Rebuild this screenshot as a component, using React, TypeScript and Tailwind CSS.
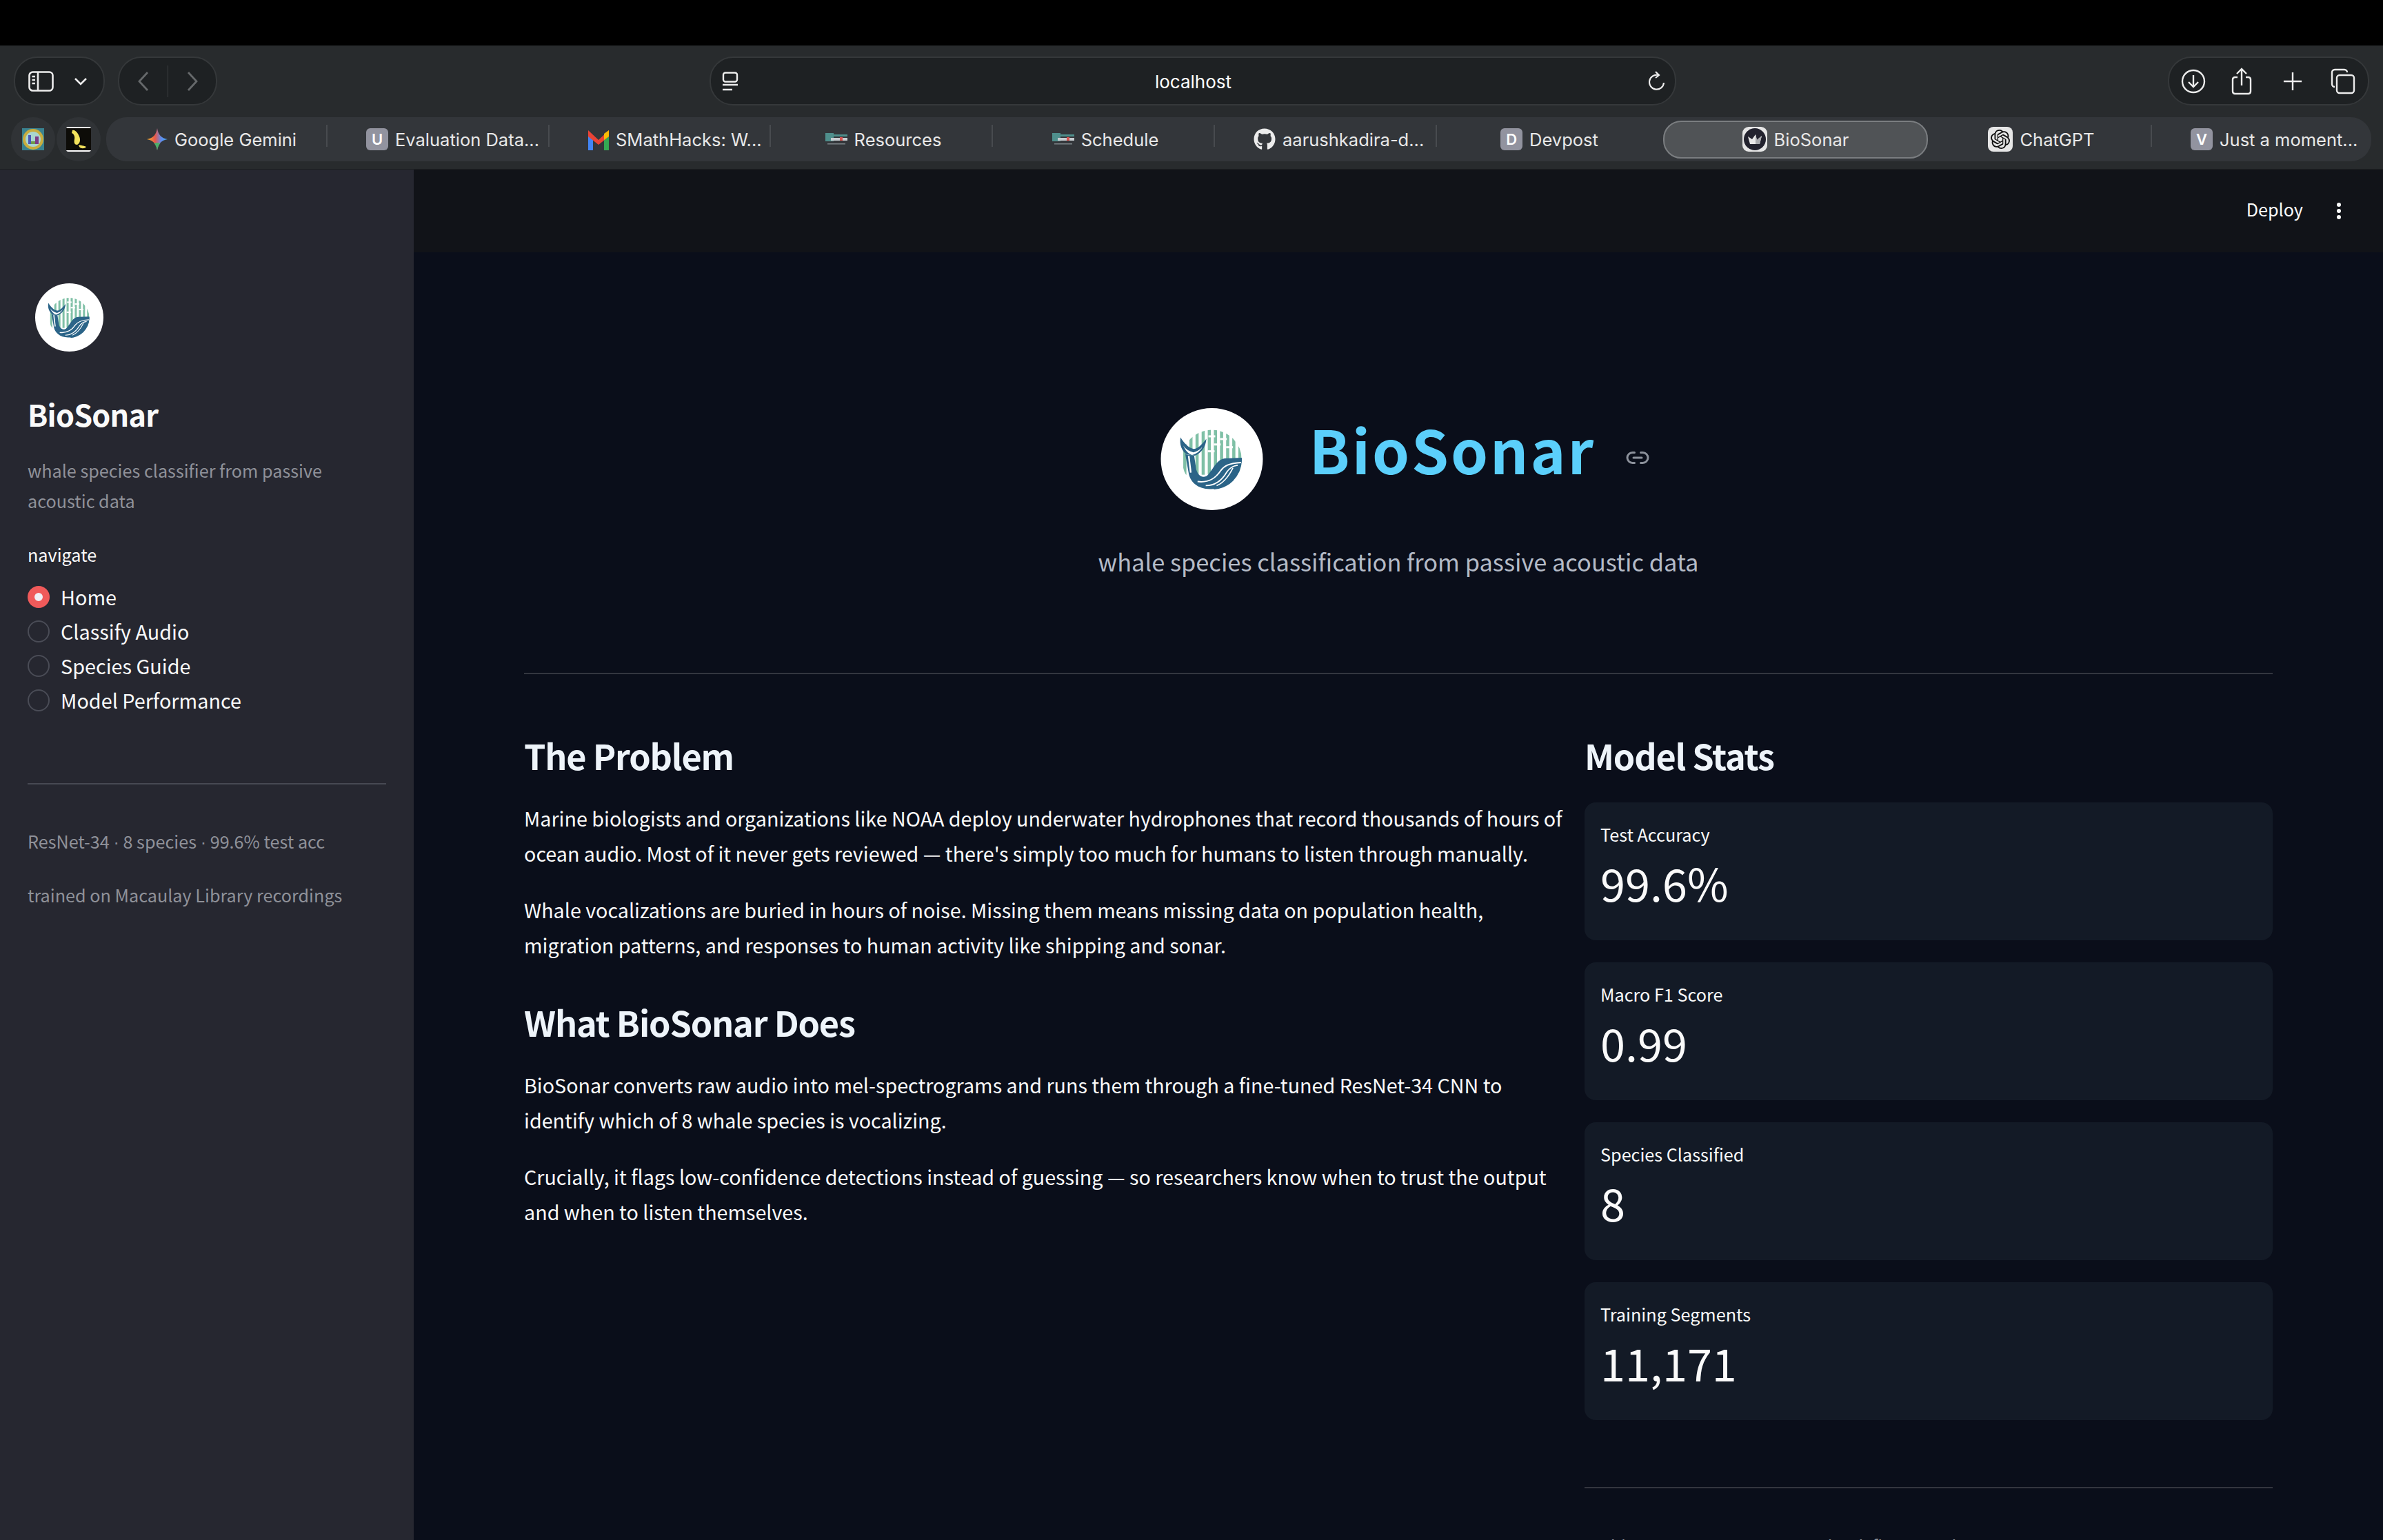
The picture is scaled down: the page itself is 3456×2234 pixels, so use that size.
import React from "react";
import { Link2 } from "lucide-react";
import { FaGithub } from "react-icons/fa";
import { SiOpenai } from "react-icons/si";

interface TabItem {
  title: string;
  icon: React.ReactNode;
  width: string;
  inset: string;
  active?: boolean;
}

const LetterIcon = ({ letter }: { letter: string }) => (
  <span className="flex h-[32px] w-[32px] shrink-0 items-center justify-center rounded-[6px] bg-[#92939f] text-[22px] font-semibold text-white">
    {letter}
  </span>
);

const GeminiIcon = () => (
  <svg viewBox="0 0 30 32" className="h-[32px] w-[30px] shrink-0">
    <defs>
      <linearGradient id="gem" x1="0" y1="0" x2="1" y2="0">
        <stop offset="0" stopColor="#f5b52e" />
        <stop offset="0.4" stopColor="#e8574a" />
        <stop offset="0.7" stopColor="#5c8df0" />
        <stop offset="1" stopColor="#4aa8ee" />
      </linearGradient>
    </defs>
    <path d="M15 0C16.4 9.5 21 14.6 30 16C21 17.4 16.4 22.5 15 32C13.6 22.5 9 17.4 0 16C9 14.6 13.6 9.5 15 0Z" fill="url(#gem)" />
    <path d="M10.5 22C12.5 24 14 27 15 32C16 27 17.5 24 19.5 22C17 20.8 13 20.8 10.5 22Z" fill="#4caf6a" />
  </svg>
);

const GmailIcon = () => (
  <svg viewBox="0 0 30 32" className="h-[32px] w-[30px] shrink-0">
    <path d="M0 6V32H7V14Z" fill="#4285f4" />
    <path d="M30 6V32H23V14Z" fill="#34a853" />
    <path d="M0 3L15 17L30 3V12L15 24L0 12Z" fill="#ea4335" />
    <path d="M23 8L30 3V12L23 17Z" fill="#fbbc04" />
  </svg>
);

const SmathIcon = () => (
  <svg viewBox="0 0 32 20" className="h-[20px] w-[32px] shrink-0">
    <rect x="0" y="1" width="12" height="12" fill="#4f8f8c" />
    <rect x="12" y="3" width="20" height="3" fill="#4f8f8c" />
    <rect x="8" y="8" width="24" height="4" fill="#c8ccd0" />
    <rect x="21" y="7" width="4" height="5" fill="#d9534f" />
    <rect x="3" y="16" width="26" height="1.5" fill="#7d8488" />
  </svg>
);

const CrownIcon = () => (
  <span className="flex h-[36px] w-[36px] shrink-0 items-center justify-center rounded-[9px] bg-[#e6e6e6]">
    <span className="flex h-[32px] w-[32px] items-center justify-center rounded-full bg-[#22222e]">
      <svg viewBox="0 0 24 24" className="h-[24px] w-[24px]">
        <path d="M2 8L8 12L13 5L15 13L22 7L19 19H5Z" fill="#e8e8e8" />
        <path d="M13 5L15 13L22 7L19 19H13Z" fill="#a9aaae" />
      </svg>
    </span>
  </span>
);

const ChatIcon = () => (
  <span className="flex h-[36px] w-[36px] shrink-0 items-center justify-center rounded-[8px] bg-[#e6e6e6] text-[#111]">
    <SiOpenai size={28} />
  </span>
);

const cutOff = "justify-start pl-[56px]";
const centred = "justify-center pl-[4px]";

const tabs: TabItem[] = [
  { title: "Google Gemini", icon: <GeminiIcon />, width: "w-[321px]", inset: "justify-center pl-[14px]" },
  { title: "Evaluation Data...", icon: <LetterIcon letter="U" />, width: "w-[322px]", inset: cutOff },
  { title: "SMathHacks: W...", icon: <GmailIcon />, width: "w-[321px]", inset: cutOff },
  { title: "Resources", icon: <SmathIcon />, width: "w-[322px]", inset: centred },
  { title: "Schedule", icon: <SmathIcon />, width: "w-[322px]", inset: centred },
  {
    title: "aarushkadira-d...",
    icon: <FaGithub size={32} className="shrink-0 text-[#ececec]" />,
    width: "w-[322px]",
    inset: cutOff,
  },
  { title: "Devpost", icon: <LetterIcon letter="D" />, width: "w-[322px]", inset: centred },
  { title: "BioSonar", icon: <CrownIcon />, width: "w-[384px]", inset: "justify-center", active: true },
  { title: "ChatGPT", icon: <ChatIcon />, width: "w-[325px]", inset: centred },
  { title: "Just a moment...", icon: <LetterIcon letter="V" />, width: "w-[318px]", inset: cutOff },
];

const stats = [
  { label: "Test Accuracy", value: "99.6%" },
  { label: "Macro F1 Score", value: "0.99" },
  { label: "Species Classified", value: "8" },
  { label: "Training Segments", value: "11,171" },
];

const navOptions = ["Home", "Classify Audio", "Species Guide", "Model Performance"];

const barXs = [33, 42, 51, 60, 69, 78, 87, 96, 105, 114];

const WhaleLogo = ({ className }: { className: string }) => (
  <svg viewBox="0 0 150 150" className={className}>
    <defs>
      <clipPath id="whale-clip">
        <circle cx="75" cy="76" r="44" />
      </clipPath>
    </defs>
    <circle cx="75" cy="75" r="75" fill="#ffffff" />
    <g clipPath="url(#whale-clip)">
      {barXs.map((x) => (
        <rect key={x} x={x} y="28" width="4.6" height="70" fill="#7fc0a6" />
      ))}
      <rect x="70" y="40" width="10" height="3" fill="#fff" />
      <rect x="78" y="52" width="10" height="3" fill="#fff" />
      <rect x="87" y="44" width="10" height="3" fill="#fff" />
      <rect x="69" y="62" width="10" height="3" fill="#fff" />
      <rect x="96" y="56" width="10" height="3" fill="#fff" />
      <path d="M80 122C100 122 130 110 130 74L92 75C82 77 76 92 66 102Z" fill="#2b6488" />
    </g>
    <path d="M36 68L41 96C43 108 54 119 72 119C98 120 114 102 119 78L119 73L94 74C82 76 78 88 70 98C63 104 55 101 52 90L49 70Z" fill="#2b6488" />
    <path d="M29 43C27 54 31 63 38 68L50 70C59 66 66 58 67 45C60 54 54 60 48 60C40 58 34 51 29 43Z" fill="#2b6488" />
    <path d="M33 55C36 60 42 64 48 65C53 64 58 61 61 57C58 63 53 67 46 69C40 67 36 62 33 55Z" fill="#fff" />
    <path d="M41 70L44 95" stroke="#fff" strokeWidth="2.4" fill="none" />
    <path d="M54 108C70 110 80 104 88 92C93 85 100 81 118 80" stroke="#fff" strokeWidth="2" fill="none" />
    <path d="M66 114C80 114 90 106 97 94C101 88 106 85 113 84" stroke="#fff" strokeWidth="1.8" fill="none" />
    <path d="M82 114C92 110 100 100 106 88" stroke="#fff" strokeWidth="1.6" fill="none" />
  </svg>
);

const SealIcon = () => (
  <svg viewBox="0 0 32 32" className="h-[32px] w-[32px]">
    <rect width="32" height="32" fill="#3a8290" />
    <circle cx="16" cy="16" r="15" fill="#c9ad3e" />
    <circle cx="16" cy="16" r="11" fill="#a9d6d0" />
    <rect x="9" y="10" width="4" height="13" fill="#4a58b8" />
    <rect x="19" y="12" width="5" height="11" fill="#7c3a86" />
    <rect x="13" y="19" width="6" height="4" fill="#6f9a4c" />
  </svg>
);

const BeaverIcon = () => (
  <svg viewBox="0 0 36 36" className="h-[36px] w-[36px]">
    <rect width="36" height="36" rx="3" fill="#ffffff" />
    <rect y="2" width="36" height="32" fill="#0d0c08" />
    <path d="M9 5C13 4 17 9 19 14C21 19 20 24 16 26C12 26 11 23 12 18C13 14 11 10 8 9Z" fill="#f2e25c" />
    <path d="M18 26C23 27 28 28 29 29C27 32 21 32 19 29Z" fill="#f2e25c" />
  </svg>
);

const BrowserChrome = () => (
  <div className="flex h-[180px] flex-col border-b border-[#1d1f21] bg-[#282b2d] pt-[16px]">
    <div className="flex justify-between px-[20px]">
      <div className="flex gap-[19px]">
        <div className="flex h-[71px] w-[132px] items-center rounded-[34px] border-2 border-[#35383a] bg-[#1e2123] pl-[19px] text-[#ececec]">
          <svg viewBox="0 0 37 30" className="h-[30px] w-[37px]" fill="none" stroke="currentColor" strokeWidth="2.6">
            <rect x="1.5" y="1.5" width="34" height="27" rx="5" />
            <path d="M14 2V28" />
            <path d="M5.5 8H10M5.5 13H10M5.5 18H10" />
          </svg>
          <svg viewBox="0 0 20 12" className="ml-[29px] h-[12px] w-[20px]" fill="none" stroke="currentColor" strokeWidth="2.6">
            <path d="M2 2L10 10L18 2" />
          </svg>
        </div>
        <div className="flex h-[71px] w-[144px] items-center rounded-[34px] border-2 border-[#35383a] bg-[#1e2123] text-[#66696b]">
          <div className="flex h-[46px] w-[72px] items-center justify-center border-r border-[#3b3e40]">
            <svg viewBox="0 0 18 30" className="h-[30px] w-[18px]" fill="none" stroke="currentColor" strokeWidth="2.8">
              <path d="M15 2L3 15L15 28" />
            </svg>
          </div>
          <div className="flex h-[46px] w-[70px] items-center justify-center">
            <svg viewBox="0 0 18 30" className="h-[30px] w-[18px]" fill="none" stroke="currentColor" strokeWidth="2.8">
              <path d="M3 2L15 15L3 28" />
            </svg>
          </div>
        </div>
      </div>
      <div className="flex h-[71px] w-[1402px] items-center justify-between rounded-[34px] border-2 border-[#35383a] bg-[#1e2123] pl-[16px] pr-[14px] text-[#ececec]">
        <svg viewBox="0 0 24 28" className="h-[28px] w-[24px]" fill="none" stroke="currentColor" strokeWidth="2.4">
          <rect x="2" y="1.5" width="20" height="13" rx="3" />
          <path d="M1 19H23M1 26H15" />
        </svg>
        <span className="pt-[2px] font-['Inter',sans-serif] text-[26px] text-white">localhost</span>
        <svg viewBox="0 0 24 30" className="h-[30px] w-[24px]" fill="none" stroke="currentColor" strokeWidth="2.2">
          <path d="M14 6A10.5 10.5 0 1 0 22 17" />
          <path d="M10 1L15 6L10 10" />
        </svg>
      </div>
      <div className="flex h-[71px] w-[292px] items-center rounded-[34px] border-2 border-[#35383a] bg-[#1e2123] pl-[17px] text-[#ececec]">
        <svg viewBox="0 0 36 36" className="h-[36px] w-[36px]" fill="none" stroke="currentColor" strokeWidth="2.4">
          <circle cx="18" cy="18" r="16" />
          <path d="M18 9V26M11 19L18 26L25 19" />
        </svg>
        <svg viewBox="0 0 30 40" className="ml-[37px] h-[40px] w-[30px]" fill="none" stroke="currentColor" strokeWidth="2.4">
          <path d="M9 14H5A3.5 3.5 0 0 0 2 17.5V34.5A3.5 3.5 0 0 0 5 38H25A3.5 3.5 0 0 0 28 34.5V17.5A3.5 3.5 0 0 0 25 14H21" />
          <path d="M15 26V2M8 9L15 2L22 9" />
        </svg>
        <svg viewBox="0 0 30 30" className="ml-[45px] h-[28px] w-[28px]" fill="none" stroke="currentColor" strokeWidth="2.6">
          <path d="M15 1V29M1 15H29" />
        </svg>
        <svg viewBox="0 0 36 38" className="ml-[41px] h-[38px] w-[36px]" fill="none" stroke="currentColor" strokeWidth="2.4">
          <path d="M6 27A4 4 0 0 1 2 23V6A4 4 0 0 1 6 2H20A4 4 0 0 1 24 6" />
          <rect x="9" y="10" width="25" height="26" rx="4" />
        </svg>
      </div>
    </div>
    <div className="mt-[17px] flex h-[64px] px-[16px]">
      <div className="flex w-[64px] items-center justify-center rounded-full bg-[#303336]">
        <SealIcon />
      </div>
      <div className="ml-[2px] flex w-[64px] items-center justify-center rounded-full bg-[#303336]">
        <BeaverIcon />
      </div>
      <div className="ml-[8px] flex w-[3285px] items-center rounded-[30px] bg-[#33363a] font-['Inter',sans-serif] text-[25.5px] text-[#e8e8e8]">
        {tabs.map((tab) => (
          <div
            key={tab.title}
            className={`flex h-[55px] shrink-0 items-center gap-[10px] ${tab.width} ${tab.inset} ${
              tab.active
                ? "ml-[6px] rounded-[26px] border-2 border-[#7b7e81] bg-[#505356]"
                : "relative after:absolute after:right-0 after:top-[6px] after:h-[32px] after:w-[2px] after:bg-[#484b4f]"
            } ${tab.title === "Devpost" || tab.title === "Just a moment..." ? "after:hidden" : ""}`}
          >
            {tab.icon}
            <span className="whitespace-nowrap pt-[2px]">{tab.title}</span>
          </div>
        ))}
      </div>
    </div>
  </div>
);

// the CJK family's own middle dot is full width, so it comes from a latin face
const Dot = () => <span className="font-['Liberation_Sans',sans-serif]">·</span>;

const Sidebar = () => (
  <aside className="h-full w-[600px] shrink-0 bg-[#262730] px-[40px] pt-[165px]">
    <WhaleLogo className="ml-[11px] h-[99px] w-[99px]" />
    <h2 className="mt-[60px] text-[43.2px] font-semibold leading-[60px] tracking-[-0.8px] text-[#fafafa]">BioSonar</h2>
    <p className="mt-[30px] text-[25.2px] leading-[44px] text-[#8f9199]">
      whale species classifier from passive acoustic data
    </p>
    <p className="mt-[36px] text-[25.2px] leading-[40px] text-[#fafafa]">navigate</p>
    <div className="mt-[17px]">
      {navOptions.map((opt, idx) => (
        <div key={opt} className="flex h-[50px] items-center gap-[16px]">
          {idx === 0 ? (
            <span className="flex h-[32px] w-[32px] items-center justify-center rounded-full bg-[#f05a5a]">
              <span className="h-[12px] w-[12px] rounded-full bg-[#f0f0f5]" />
            </span>
          ) : (
            <span className="h-[32px] w-[32px] rounded-full border-2 border-[#4a4c56]" />
          )}
          <span className="text-[28.8px] leading-[50px] text-[#fafafa]">{opt}</span>
        </div>
      ))}
    </div>
    <hr className="mt-[95px] h-[2px] border-0 bg-[#474953]" />
    <p className="mt-[60px] text-[25.2px] leading-[44px] text-[#8f9199]">
      ResNet-34 <Dot /> 8 species <Dot /> 99.6% test acc
    </p>
    <p className="mt-[32px] text-[25.2px] leading-[44px] text-[#8f9199]">trained on Macaulay Library recordings</p>
  </aside>
);

const Paragraph = ({ children, top }: { children: React.ReactNode; top: string }) => (
  <p className={`${top} text-[28.7px] leading-[51px] text-[#fafafa]`}>{children}</p>
);

const Heading = ({ children, top }: { children: React.ReactNode; top?: string }) => (
  <h3 className={`${top ?? ""} text-[50.4px] font-semibold leading-[80px] tracking-[-1.2px] text-[#eef4fa]`}>
    {children}
  </h3>
);

const Main = () => (
  <main className="min-w-0 flex-1 bg-[#0a0e1a]">
    <div className="flex h-[120px] items-center justify-end bg-[#111318] pr-[60px] text-[#fafafa]">
      <span className="mb-[6px] text-[25.2px] leading-[40px]">Deploy</span>
      <svg viewBox="0 0 8 26" className="ml-[48px] h-[26px] w-[8px]" fill="currentColor">
        <circle cx="4" cy="4" r="3" />
        <circle cx="4" cy="13" r="3" />
        <circle cx="4" cy="22" r="3" />
      </svg>
    </div>
    <div className="px-[160px] pt-[226px]">
      <div className="flex items-center justify-center pl-[20px]">
        <WhaleLogo className="h-[148px] w-[149px] shrink-0" />
        <h1 className="-mt-[30px] ml-[67px] text-[86.4px] font-bold leading-[150px] tracking-[3px] text-[#5bcffb]">
          BioSonar
        </h1>
        <Link2 size={36} strokeWidth={2} className="mb-[4px] ml-[43px] text-[#8c919b]" />
      </div>
      <p className="mt-[46px] text-center text-[34.4px] leading-[56px] text-[#b4bbc7]">
        whale species classification from passive acoustic data
      </p>
      <hr className="mt-[134px] h-[2px] border-0 bg-[#33363f]" />
      <div className="mt-[78px] grid grid-cols-[1513px_998px] gap-[25px]">
        <div>
          <Heading>The Problem</Heading>
          <Paragraph top="mt-[25px]">
            Marine biologists and organizations like NOAA deploy underwater hydrophones that record thousands of hours
            of ocean audio. Most of it never gets reviewed — there's simply too much for humans to listen through
            manually.
          </Paragraph>
          <Paragraph top="mt-[31px]">
            Whale vocalizations are buried in hours of noise. Missing them means missing data on population health,
            migration patterns, and responses to human activity like shipping and sonar.
          </Paragraph>
          <Heading top="mt-[47px]">What BioSonar Does</Heading>
          <Paragraph top="mt-[25px]">
            BioSonar converts raw audio into mel-spectrograms and runs them through a fine-tuned ResNet-34 CNN to
            identify which of 8 whale species is vocalizing.
          </Paragraph>
          <Paragraph top="mt-[31px]">
            Crucially, it flags low-confidence detections instead of guessing — so researchers know when to trust the
            output and when to listen themselves.
          </Paragraph>
        </div>
        <div>
          <Heading>Model Stats</Heading>
          <div className="mt-[28px] flex flex-col gap-[32px]">
            {stats.map((s) => (
              <div key={s.label} className="h-[200px] rounded-[16px] bg-[#131a26] px-[23px] pt-[26px]">
                <div className="text-[25.2px] leading-[40px] text-[#fafafa]">{s.label}</div>
                <div className="mt-[5px] text-[64.8px] leading-[90px] text-[#fafafa]">{s.value}</div>
              </div>
            ))}
          </div>
          <hr className="mt-[97px] h-[2px] border-0 bg-[#33363f]" />
          <p className="mt-[61px] text-[25.2px] leading-[44px] text-[#8f9199]">
            Architecture: ResNet-34 pretrained, fine-tuned
          </p>
        </div>
      </div>
    </div>
  </main>
);

export default function App() {
  return (
    <div className="flex h-[2234px] w-full flex-col overflow-hidden bg-black font-['Noto_Sans_CJK_SC','Noto_Sans',sans-serif]">
      <div className="h-[66px] shrink-0 bg-black" />
      <BrowserChrome />
      <div className="flex min-h-0 flex-1">
        <Sidebar />
        <Main />
      </div>
    </div>
  );
}
